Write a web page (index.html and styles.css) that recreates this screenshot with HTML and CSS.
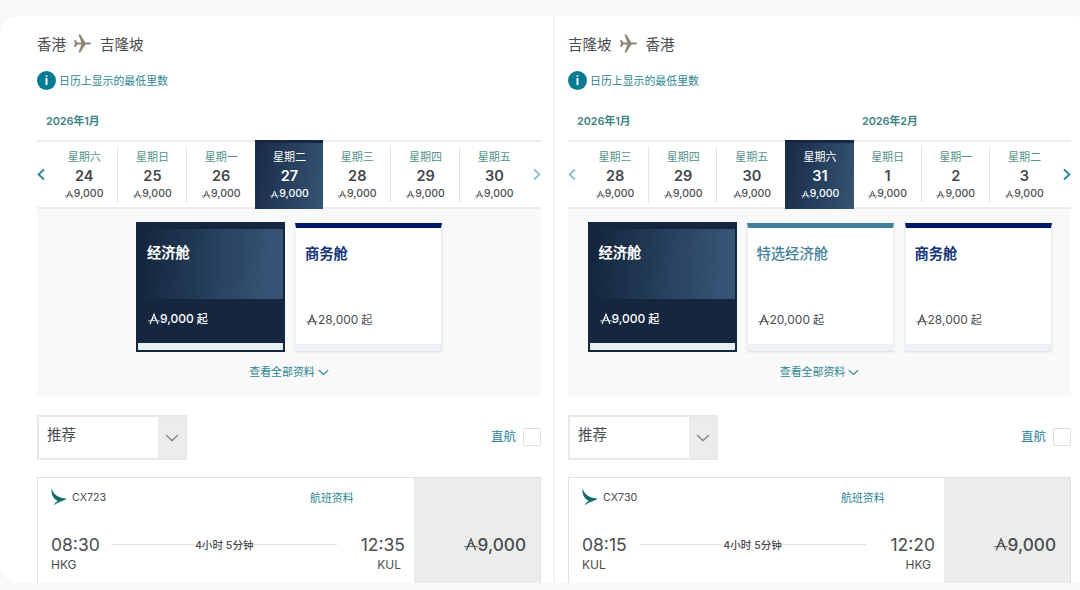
FILE: index.html
```html
<!DOCTYPE html>
<html lang="zh-CN">
<head>
<meta charset="UTF-8">
<meta name="viewport" content="width=device-width, initial-scale=1.0">
<title>选择航班</title>
<link rel="stylesheet" href="styles.css">
</head>
<body>
<svg class="sprite" width="0" height="0">
  <symbol id="miles" viewBox="0 0 12 12">
    <path d="M2 11 L6 1.2 L10 11" fill="none" stroke="currentColor" stroke-width="1.1"/>
    <path d="M0.2 8 L3.4 7.6 L6 4.6 L8.6 7.6 L11.8 8 M3.4 7.6 H8.6" fill="none" stroke="currentColor" stroke-width="0.8"/>
  </symbol>
  <symbol id="plane" viewBox="0 0 18 18">
    <path d="M0 5.4 L1.4 5.4 L3.6 8 L7.4 8 L4.4 0 L6.4 0 L11.4 8 L16.2 8 Q18 9 16.2 10 L11.4 10 L6.4 18 L4.4 18 L7.4 10 L3.6 10 L1.4 12.6 L0 12.6 L1 9 Z" fill="currentColor"/>
  </symbol>
  <symbol id="left" viewBox="0 0 8 12">
    <path d="M7 1 L1.6 6 L7 11" fill="none" stroke="currentColor" stroke-width="2"/>
  </symbol>
  <symbol id="right" viewBox="0 0 8 12">
    <path d="M1 1 L6.4 6 L1 11" fill="none" stroke="currentColor" stroke-width="2"/>
  </symbol>
  <symbol id="down" viewBox="0 0 14 8">
    <path d="M1 1 L7 6.6 L13 1" fill="none" stroke="currentColor" stroke-width="1.5"/>
  </symbol>
  <symbol id="wing" viewBox="0 0 16 18">
    <path d="M0.5 0.4 C2 5.4 6.4 10 15.7 10.6 C14 12.9 8 13.4 2.8 17.4 C3.8 14.8 5 13.8 6.8 13 C2.4 10.6 0 6.6 0.5 0.4 Z" fill="currentColor"/>
  </symbol>
</svg>

<main class="page">
  <section class="panel">
    <h2 class="route">香港 <svg class="plane"><use href="#plane"/></svg> 吉隆坡</h2>
    <p class="info"><span class="info-icon">i</span>日历上显示的最低里数</p>
    <div class="months"><span class="month">2026年1月</span></div>
    <div class="calendar">
      <svg class="arrow"><use href="#left"/></svg>
      <div class="day"><span class="week">星期六</span><b>24</b><span class="fare"><svg><use href="#miles"/></svg>9,000</span></div>
      <div class="day"><span class="week">星期日</span><b>25</b><span class="fare"><svg><use href="#miles"/></svg>9,000</span></div>
      <div class="day"><span class="week">星期一</span><b>26</b><span class="fare"><svg><use href="#miles"/></svg>9,000</span></div>
      <div class="day selected"><span class="week">星期二</span><b>27</b><span class="fare"><svg><use href="#miles"/></svg>9,000</span></div>
      <div class="day"><span class="week">星期三</span><b>28</b><span class="fare"><svg><use href="#miles"/></svg>9,000</span></div>
      <div class="day"><span class="week">星期四</span><b>29</b><span class="fare"><svg><use href="#miles"/></svg>9,000</span></div>
      <div class="day"><span class="week">星期五</span><b>30</b><span class="fare"><svg><use href="#miles"/></svg>9,000</span></div>
      <svg class="arrow next light"><use href="#right"/></svg>
    </div>
    <div class="cabins">
      <div class="cabin-list">
        <div class="cabin active"><h3>经济舱</h3><p><svg><use href="#miles"/></svg>9,000 <small>起</small></p></div>
        <div class="cabin business"><h3>商务舱</h3><p><svg><use href="#miles"/></svg>28,000 <small>起</small></p></div>
      </div>
      <a class="details">查看全部资料<svg><use href="#down"/></svg></a>
    </div>
    <div class="filters">
      <div class="select"><span>推荐</span><i><svg><use href="#down"/></svg></i></div>
      <label class="direct">直航<span class="box"></span></label>
    </div>
    <article class="flight">
      <div class="flight-main">
        <div class="flight-top">
          <svg class="wing"><use href="#wing"/></svg><span class="number">CX723</span>
          <a class="flight-link">航班资料</a>
        </div>
        <div class="times">
          <div class="stop"><b>08:30</b><span>HKG</span></div>
          <div class="duration"><span>4小时 5分钟</span></div>
          <div class="stop end"><b>12:35</b><span>KUL</span></div>
        </div>
      </div>
      <div class="price"><svg><use href="#miles"/></svg>9,000</div>
    </article>
  </section>

  <section class="panel">
    <h2 class="route">吉隆坡 <svg class="plane"><use href="#plane"/></svg> 香港</h2>
    <p class="info"><span class="info-icon">i</span>日历上显示的最低里数</p>
    <div class="months"><span class="month">2026年1月</span><span class="month">2026年2月</span></div>
    <div class="calendar">
      <svg class="arrow light"><use href="#left"/></svg>
      <div class="day"><span class="week">星期三</span><b>28</b><span class="fare"><svg><use href="#miles"/></svg>9,000</span></div>
      <div class="day"><span class="week">星期四</span><b>29</b><span class="fare"><svg><use href="#miles"/></svg>9,000</span></div>
      <div class="day"><span class="week">星期五</span><b>30</b><span class="fare"><svg><use href="#miles"/></svg>9,000</span></div>
      <div class="day selected"><span class="week">星期六</span><b>31</b><span class="fare"><svg><use href="#miles"/></svg>9,000</span></div>
      <div class="day"><span class="week">星期日</span><b>1</b><span class="fare"><svg><use href="#miles"/></svg>9,000</span></div>
      <div class="day"><span class="week">星期一</span><b>2</b><span class="fare"><svg><use href="#miles"/></svg>9,000</span></div>
      <div class="day"><span class="week">星期二</span><b>3</b><span class="fare"><svg><use href="#miles"/></svg>9,000</span></div>
      <svg class="arrow next"><use href="#right"/></svg>
    </div>
    <div class="cabins">
      <div class="cabin-list">
        <div class="cabin active"><h3>经济舱</h3><p><svg><use href="#miles"/></svg>9,000 <small>起</small></p></div>
        <div class="cabin premium"><h3>特选经济舱</h3><p><svg><use href="#miles"/></svg>20,000 <small>起</small></p></div>
        <div class="cabin business"><h3>商务舱</h3><p><svg><use href="#miles"/></svg>28,000 <small>起</small></p></div>
      </div>
      <a class="details">查看全部资料<svg><use href="#down"/></svg></a>
    </div>
    <div class="filters">
      <div class="select"><span>推荐</span><i><svg><use href="#down"/></svg></i></div>
      <label class="direct">直航<span class="box"></span></label>
    </div>
    <article class="flight">
      <div class="flight-main">
        <div class="flight-top">
          <svg class="wing"><use href="#wing"/></svg><span class="number">CX730</span>
          <a class="flight-link">航班资料</a>
        </div>
        <div class="times">
          <div class="stop"><b>08:15</b><span>KUL</span></div>
          <div class="duration"><span>4小时 5分钟</span></div>
          <div class="stop end"><b>12:20</b><span>HKG</span></div>
        </div>
      </div>
      <div class="price"><svg><use href="#miles"/></svg>9,000</div>
    </article>
  </section>
</main>
</body>
</html>
```
FILE: styles.css
```css
* {
  box-sizing: border-box;
}

body {
  margin: 0;
  padding-top: 16px;
  height: 590px;
  overflow: hidden;
  background: #f8f8f8;
  color: #4a4d50;
  font-family: Inter, "Noto Sans CJK SC", sans-serif;
}

h2, h3, p {
  margin: 0;
}

.sprite {
  position: absolute;
}

.page {
  display: flex;
  height: 567px;
  background: #fff;
  border-radius: 20px 5px 5px 20px;
  overflow: hidden;
}

.panel {
  width: 555px;
  flex: none;
  padding: 15px 12px 0 37px;
  border-right: 2px solid #f5f5f6;
}

.panel + .panel {
  width: 525px;
  padding: 15px 9px 0 13px;
  border-right: 0;
}

.route {
  display: flex;
  align-items: center;
  gap: 8px;
  height: 24px;
  font-size: 14.5px;
  font-weight: 400;
}

.plane {
  width: 18px;
  height: 19px;
  color: #8f8775;
}

.info {
  display: flex;
  align-items: center;
  gap: 3px;
  height: 20px;
  margin-top: 15px;
  font-size: 10.9px;
  color: #2c8593;
}

.info-icon {
  width: 19px;
  height: 19px;
  border-radius: 50%;
  background: #047b92;
  color: #fff;
  font-size: 12px;
  font-weight: 700;
  line-height: 19px;
  text-align: center;
}

.months {
  display: grid;
  grid-template-columns: 285px 1fr;
  height: 50px;
  padding: 23px 0 0 9px;
}

.month {
  font-size: 10.8px;
  font-weight: 600;
  line-height: 18px;
  color: #3c8480;
}

/* calendar */
.calendar {
  display: grid;
  grid-template-columns: 13px repeat(7, 1fr) 13px;
  align-items: center;
  height: 69px;
  border-top: 2px solid #ececec;
  border-bottom: 2px solid #ececec;
}

.arrow {
  width: 8px;
  height: 13px;
  color: #2b8ba0;
}

.next {
  justify-self: end;
}

.light {
  color: #8fc3d2;
}

.day {
  display: flex;
  flex-direction: column;
  align-items: center;
  height: 57px;
  padding: 3px 0 0 1px;
  border-right: 1px solid #e4e4e4;
}

.day:nth-child(8),
.day:nth-child(4) {
  border-right: 0;
}

.day.selected {
  height: 69px;
  margin: -2px 0;
  padding-top: 6px;
  border-right: 0;
  border-top: 3px solid #152944;
  background: linear-gradient(100deg, #182b47, #365475);
  color: #fff;
}

.week {
  font-size: 11px;
  line-height: 16px;
  color: #55938d;
}

.day b {
  font-size: 14.5px;
  font-weight: 600;
  line-height: 22px;
  color: #43464b;
}

.fare {
  display: flex;
  align-items: center;
  font-size: 10.5px;
  font-weight: 500;
  line-height: 14px;
}

.fare svg {
  width: 9px;
  height: 9px;
}

.day.selected .week,
.day.selected b {
  color: #fff;
}

/* cabin cards */
.cabins {
  height: 187px;
  padding-top: 13px;
  background: #f9f9f9;
}

.cabin-list {
  display: flex;
  justify-content: center;
  gap: 11px;
}

.cabin {
  width: 147px;
  height: 128px;
  margin-top: 1px;
  padding: 16px 0 0 9px;
  background: #fff;
  border: 1px solid #eef0f1;
  border-top: 5px solid #00186c;
  border-bottom: 7px solid #edf1f4;
  box-shadow: 0 1px 2px rgba(0, 0, 0, 0.12);
}

.cabin h3 {
  font-size: 14.3px;
  font-weight: 700;
  line-height: 20px;
}

.cabin p {
  display: flex;
  align-items: center;
  margin-top: 46px;
  padding-left: 1px;
  font-size: 12px;
  line-height: 20px;
}

.cabin p svg {
  width: 12px;
  height: 12px;
}

.cabin small {
  margin-left: 3px;
  font-size: 11px;
}

.cabin.active {
  width: 149px;
  height: 130px;
  margin-top: 0;
  margin-right: -1px;
  padding-top: 14px;
  border: 2px solid #14273f;
  border-top-width: 7px;
  background:
    linear-gradient(#e8eff2, #e8eff2) bottom / 100% 7px no-repeat,
    linear-gradient(95deg, #14273f 5%, #365475 90%) top / 100% 70px no-repeat,
    #14273f;
  box-shadow: none;
  color: #fff;
}

.active p {
  font-weight: 500;
}

.premium {
  border-top-color: #42809a;
}

.premium h3 {
  color: #42809a;
  font-weight: 500;
}

.business h3 {
  color: #14357a;
}

.details {
  display: flex;
  justify-content: center;
  align-items: center;
  gap: 3px;
  margin-top: 11px;
  font-size: 10.9px;
  line-height: 18px;
  color: #2c8593;
}

.details svg {
  width: 11px;
  height: 7px;
}

/* sort and filter */
.filters {
  display: flex;
  justify-content: space-between;
  height: 45px;
  margin-top: 19px;
}

.select {
  display: flex;
  justify-content: space-between;
  width: 150px;
  height: 45px;
  padding-left: 8px;
  border: 2px solid #e8e9e9;
  font-size: 14.5px;
  line-height: 36px;
}

.select i {
  display: flex;
  align-items: center;
  justify-content: center;
  width: 27px;
  background: #ebedec;
  color: #8b8e8e;
}

.select svg {
  width: 14px;
  height: 8px;
}

.direct {
  display: flex;
  align-items: center;
  gap: 7px;
  height: 41px;
  font-size: 12.5px;
  color: #2c829b;
}

.box {
  width: 18px;
  height: 18px;
  margin-top: 2px;
  border: 1px solid #dedede;
  border-radius: 2px;
}

/* flight row */
.flight {
  display: flex;
  height: 120px;
  margin-top: 17px;
  border: 1px solid #dfe1e1;
}

.flight-main {
  flex: 1;
  padding: 10px 9px 0 13px;
}

.flight-top {
  display: flex;
  align-items: center;
  height: 18px;
}

.wing {
  width: 16px;
  height: 18px;
  color: #156b66;
}

.number {
  width: 238px;
  margin-left: 5px;
  padding-top: 1px;
  font-size: 10.7px;
}

.flight-link {
  font-size: 10.9px;
  color: #2c8593;
}

.times {
  display: flex;
  justify-content: space-between;
  margin-top: 26px;
}

.stop b {
  display: block;
  font-size: 17.5px;
  font-weight: 400;
  line-height: 25px;
}

.stop span {
  display: block;
  font-size: 12px;
  line-height: 16px;
}

.end span {
  text-align: right;
  padding-right: 4px;
}

.duration {
  display: flex;
  align-items: center;
  width: 226px;
  height: 25px;
  margin-right: 12px;
  font-size: 10.6px;
  font-weight: 500;
}

.duration::before,
.duration::after {
  content: "";
  flex: 1;
  height: 1px;
  background: #e2e2e2;
}

.price {
  display: flex;
  align-items: center;
  justify-content: flex-end;
  width: 126px;
  height: 100%;
  padding: 14px 14px 0 0;
  background: #ebedec;
  font-size: 17.2px;
  font-weight: 500;
}

.price svg {
  flex: none;
  width: 14px;
  height: 15px;
}
```
